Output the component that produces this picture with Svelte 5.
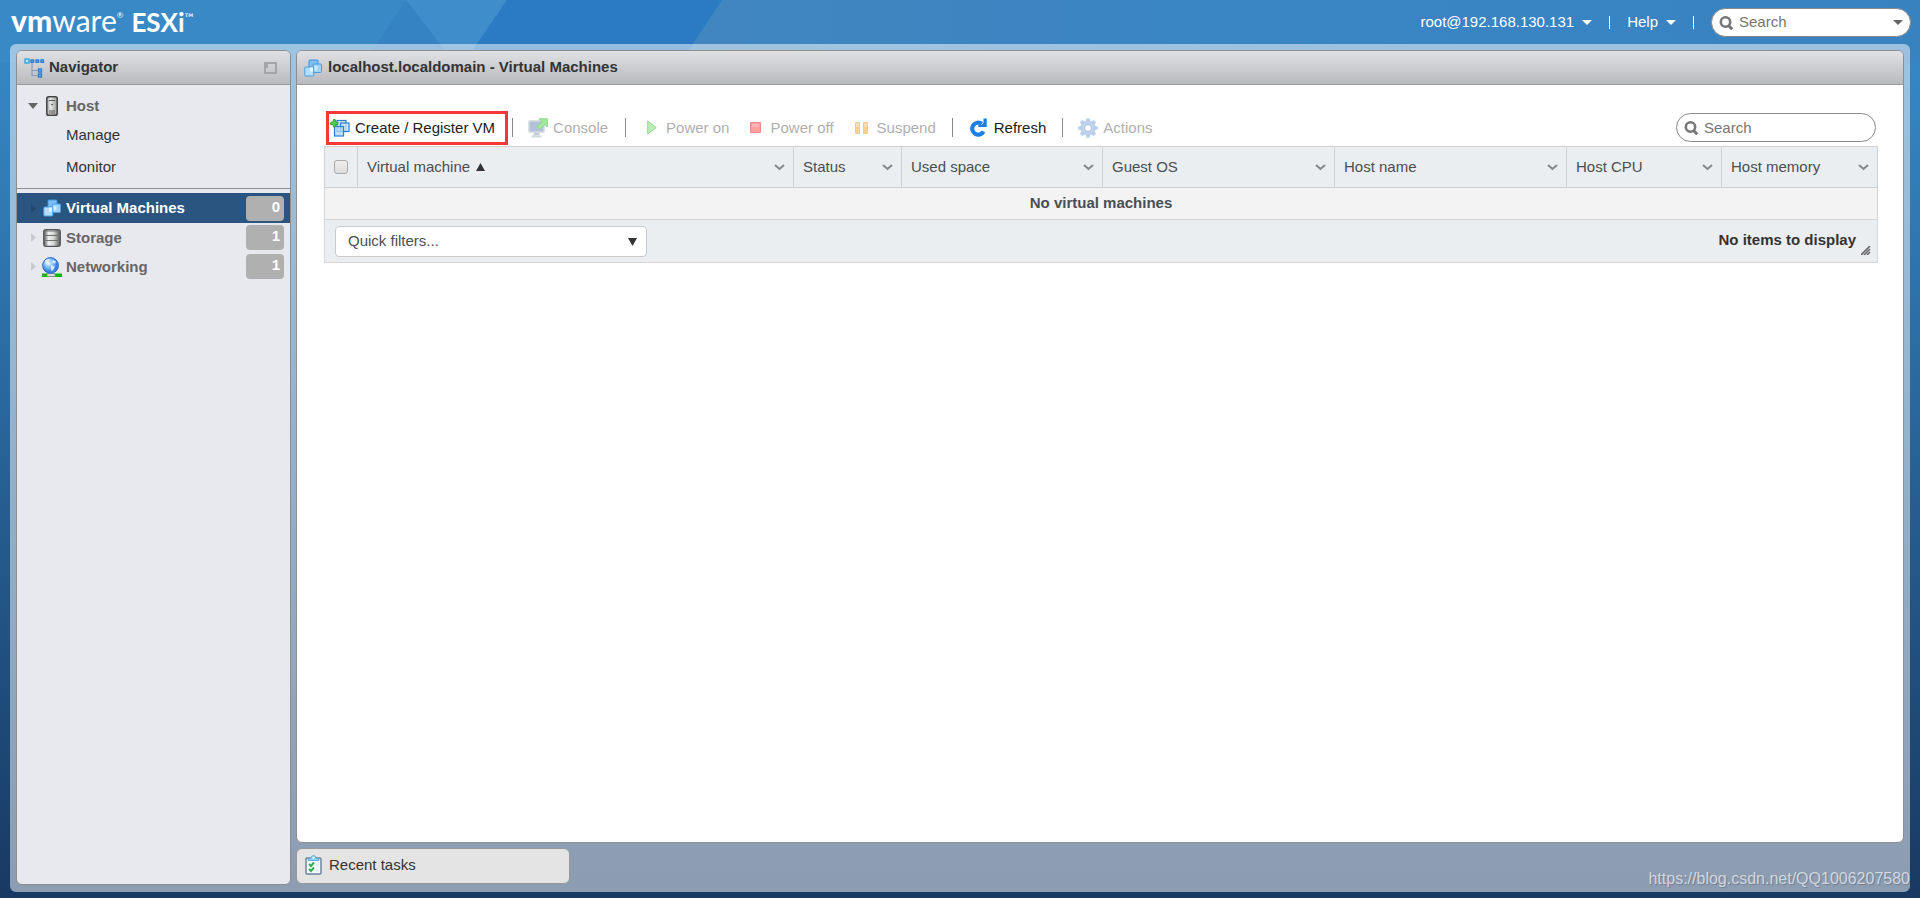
<script>
  const columns = [
    { label: 'Virtual machine', sorted: true },
    { label: 'Status', width: 108 },
    { label: 'Used space', width: 201 },
    { label: 'Guest OS', width: 232 },
    { label: 'Host name', width: 232 },
    { label: 'Host CPU', width: 155 },
    { label: 'Host memory', width: 156 }
  ];
  const inventory = [
    { label: 'Virtual Machines', icon: 'vm', count: 0, selected: true },
    { label: 'Storage', icon: 'storage', count: 1 },
    { label: 'Networking', icon: 'network', count: 1 }
  ];
</script>

{#snippet vmIcon()}
  <svg class="icon" width="18" height="18" viewBox="0 0 18 18" aria-hidden="true">
    <rect x="5" y="1" width="9" height="9" rx="1" fill="#7fc0f4" stroke="#3f93e0" />
    <rect x="9" y="5" width="8.500" height="8.500" rx="1" fill="#9dd2f9" stroke="#4a9be4" />
    <rect x=".8" y="8" width="9" height="9" rx="1" fill="#b4defb" stroke="#4a9be4" />
    <path d="M6 8.500h3v4H6z" fill="#e6f6ff" />
    <path d="M10.500 7h3v4.500h-3z" fill="#c9e9ff" />
  </svg>
{/snippet}

{#snippet magnifier()}
  <svg class="icon" width="15" height="15" viewBox="0 0 15 15" fill="none" stroke="#777" aria-hidden="true">
    <circle cx="6.500" cy="7" r="4.700" stroke-width="2.600" />
    <path d="M9.500 10.500l3.800 3.800" stroke-width="3" />
  </svg>
{/snippet}

<div class="page">
  <svg class="facets" width="100%" height="63" aria-hidden="true">
    <defs>
      <linearGradient id="sweep" x1="0" x2="1"><stop offset="0" stop-color="#4186bf" /><stop offset=".25" stop-color="#3a85c4" /><stop offset="1" stop-color="#3780bd" /></linearGradient>
    </defs>
    <rect width="100%" height="63" fill="#3a89c7" />
    <path d="M406 0L364 63H456Z" fill="#3583c2" />
    <path d="M406 0H507L464 63H455Z" fill="#408dcc" />
    <rect x="722" width="100%" height="63" fill="url(#sweep)" />
    <path d="M680 63L722 0V63Z" fill="#4186bf" />
    <path d="M507 0H722L680 63H464Z" fill="#2b7bc4" />
  </svg>

  <header>
    <h1><span class="brand"><b>vm</b>ware<sup>®</sup></span> <span class="product">ESXi<sup>™</sup></span></h1>
    <div class="account">
      <button class="menu">root@192.168.130.131<svg width="10" height="5" aria-hidden="true"><path d="M0 0h10L5 5z" fill="#fff" /></svg></button>
      <i></i>
      <button class="menu">Help<svg width="10" height="5" aria-hidden="true"><path d="M0 0h10L5 5z" fill="#fff" /></svg></button>
      <i></i>
      <label class="search global">
        {@render magnifier()}
        <input type="text" placeholder="Search" aria-label="Search inventory" />
        <svg width="10" height="5" aria-hidden="true"><path d="M0 0h10L5 5z" fill="#666" /></svg>
      </label>
    </div>
  </header>

  <div class="frame">
    <nav class="panel">
      <div class="title">
        <svg class="icon" width="21" height="20" viewBox="0 0 21 20" aria-hidden="true">
          <path d="M8 5v12.500h6M8 12.500h6M5 3h15" fill="none" stroke="#8a9bb4" stroke-width="1.200" />
          <rect x="1" y="1" width="4" height="4" fill="#aee3fa" stroke="#35a5dd" stroke-width="1.400" />
          <path d="M7 1.800h2.500v2.500H7zM12 1.800h2.500v2.500H12zM17 1.800h2.500v2.500H17zM14.500 11h3v3h-3zM14.500 16h3v3h-3z" fill="#6fb4f4" stroke="#2f7fd2" stroke-width="1.300" />
        </svg>
        <h2>Navigator</h2>
        <button class="collapse" aria-label="Collapse navigator">
          <svg width="13" height="12" aria-hidden="true"><rect x="1" y="1" width="11" height="10" fill="none" stroke="#a4a5a9" stroke-width="2" /><path d="M2 2h2v4H2z" fill="#a4a5a9" /></svg>
        </button>
      </div>
      <ul class="host">
        <li><a href="#host" class="node">
          <svg class="arrow" width="10" height="6" aria-hidden="true"><path d="M0 0h10L5 6z" fill="#666" /></svg>
          <span class="glyph">
            <svg width="12" height="20" viewBox="0 0 12 20" aria-hidden="true">
              <defs><linearGradient id="tower" x1="0" x2="1"><stop offset="0" stop-color="#999" /><stop offset=".35" stop-color="#e9e9e9" /><stop offset="1" stop-color="#999" /></linearGradient></defs>
              <rect x=".75" y=".75" width="10.500" height="18.500" rx="1.800" fill="url(#tower)" stroke="#444" stroke-width="1.500" />
              <path d="M3 4.500h6M3 15h6M3 17h6" stroke="#555" /><circle cx="6" cy="8.500" r=".8" fill="#333" />
            </svg>
          </span>
          Host
        </a></li>
        <li><a href="#manage" class="leaf">Manage</a></li>
        <li><a href="#monitor" class="leaf">Monitor</a></li>
      </ul>
      <ul class="inventory">
        {#each inventory as item}
          <li><a href="#{item.icon}" class="node" class:selected={item.selected}>
            <svg class="arrow" width="10" height="9" aria-hidden="true"><path d="M3 0v9l5-4.500z" fill={item.selected ? '#24486f' : '#c9cace'} /></svg>
            <span class="glyph">
              {#if item.icon === 'vm'}
                {@render vmIcon()}
              {:else if item.icon === 'storage'}
                <svg width="18" height="18" viewBox="0 0 18 18" aria-hidden="true">
                  <defs><linearGradient id="disk" x1="0" x2="1"><stop offset="0" stop-color="#555" /><stop offset=".3" stop-color="#f2f2f2" /><stop offset=".6" stop-color="#d5d5d5" /><stop offset="1" stop-color="#555" /></linearGradient></defs>
                  <rect x=".7" y=".7" width="16.600" height="16.600" rx="2" fill="url(#disk)" stroke="#555" stroke-width="1.200" />
                  <path d="M1 2h16M1 6.500h16M1 11.500h16" fill="none" stroke="#707070" />
                </svg>
              {:else}
                <svg width="20" height="20" viewBox="0 0 20 20" aria-hidden="true">
                  <defs><radialGradient id="globe" cx=".4" cy=".35"><stop offset="0" stop-color="#d5ebff" /><stop offset=".6" stop-color="#7db9f8" /><stop offset="1" stop-color="#3c80dd" /></radialGradient></defs>
                  <path d="M0 16.500h20v3.500H0z" fill="#0eb30e" /><path d="M5 17q3.500-2 8 0v2.500H5z" fill="#ddd" stroke="#888" stroke-width=".7" />
                  <circle cx="8.500" cy="8.500" r="7.900" fill="url(#globe)" stroke="#2a6ccb" />
                  <path d="M3 3.500q3-2 5-1L6.500 5l2 1.500-2 2L3.500 7zM9 8l4 1.500-2 4-2 .5zM11 3l3 1.500-1 2-3-1z" fill="#e8f5ff" opacity=".85" />
                </svg>
              {/if}
            </span>
            {item.label}
            <span class="count">{item.count}</span>
          </a></li>
        {/each}
      </ul>
    </nav>

    <div class="workspace">
      <main class="panel">
        <div class="title">{@render vmIcon()}<h2>localhost.localdomain - Virtual Machines</h2></div>
        <div class="content">
          <div class="toolbar">
            <button class="create">
              <svg class="icon" width="20" height="18" viewBox="0 0 20 18" aria-hidden="true">
                <rect x="7" y="1.500" width="9" height="11" fill="#d3eafb" stroke="#2b7fd8" stroke-width="1.200" />
                <rect x="10.500" y="4" width="8.500" height="8.500" fill="#c4e3fa" fill-opacity=".8" stroke="#2b7fd8" stroke-width="1.200" />
                <rect x="4.500" y="7.500" width="9" height="9.500" fill="#afd8f8" fill-opacity=".8" stroke="#2b7fd8" stroke-width="1.200" />
                <path d="M3.200.7h2.200v2.500h2.500v2.200H5.400v2.500H3.200V5.400H.7V3.200h2.500z" fill="#55d955" stroke="#28a828" />
              </svg>Create / Register VM
            </button>
            <i></i>
            <button class="console" disabled>
              <svg class="icon" width="20" height="20" viewBox="0 0 20 20" aria-hidden="true">
                <rect x=".8" y="2.800" width="15.400" height="11.400" rx="1" fill="#b3c2da" stroke="#dce1e5" stroke-width="1.600" />
                <path d="M6 14.500h5l1 3H5z" fill="#c8ced4" /><path d="M3.500 18.500h10" stroke="#d0dbe0" stroke-width="2" />
                <path d="M11 .8h8.300V9l-2.600-2.600-5.200 5-2.600-2.600 5.200-5z" fill="#a5e99b" stroke="#8cd986" />
              </svg>Console
            </button>
            <i></i>
            <button class="power" disabled>
              <svg class="icon" width="10" height="15" viewBox="0 0 10 15" aria-hidden="true"><path d="M.7 1v13l8.500-6.500z" fill="#b9efb7" stroke="#8fda8d" /></svg>Power on
            </button>
            <button class="power" disabled>
              <svg class="icon" width="11" height="11" aria-hidden="true"><path d="M.5.5h10v10H.5z" fill="#ff9f9f" stroke="#e88c8c" /><path d="M2 2h7v3H2z" fill="#ffb5b5" /></svg>Power off
            </button>
            <button class="power pause" disabled>
              <svg class="icon" width="13" height="12" aria-hidden="true"><path d="M.5.5h4v11h-4zM8.500.5h4v11h-4z" fill="#fdcf8f" stroke="#f8c78b" /><path d="M1 1h3v4H1zM9 1h3v4H9z" fill="#ffdcae" /></svg>Suspend
            </button>
            <i></i>
            <button class="refresh">
              <svg class="icon" width="19" height="19" viewBox="0 0 19 19" aria-hidden="true"><path d="M12.800 5.800A6 6 0 1 0 14.500 13.500" fill="none" stroke="#1b7fe4" stroke-width="4.200" /><path d="M17.800.5V9H9.300V7h3L14.500 5V.5z" fill="#1b7fe4" /></svg>Refresh
            </button>
            <i></i>
            <button class="actions" disabled>
              <svg class="icon" width="20" height="20" viewBox="-10 -10 20 20" aria-hidden="true">
                {#each [0, 45, 90, 135] as turn}<rect x="-1.800" y="-9.800" width="3.600" height="19.600" rx=".6" fill="#b9cdea" transform="rotate({turn})" />{/each}
                <circle r="7.300" fill="#bfd1ed" stroke="#b0c6e6" stroke-width=".7" /><circle r="3.500" fill="#fff" stroke="#a9bddc" />
              </svg>Actions
            </button>
            <label class="search filter">
              {@render magnifier()}
              <input type="text" placeholder="Search" aria-label="Search virtual machines" />
            </label>
          </div>

          <table>
            <colgroup>
              <col style="width: 33px" />
              {#each columns as column}<col style={column.width ? `width: ${column.width}px` : ''} />{/each}
            </colgroup>
            <thead>
              <tr>
                <th class="check"><input type="checkbox" aria-label="Select all" /></th>
                {#each columns as column}
                  <th scope="col"><span class="heading">
                    {column.label}
                    {#if column.sorted}<svg width="9" height="8" aria-hidden="true"><path d="M0 8h9L4.500 0z" fill="#333" /></svg>{/if}
                    <button aria-label="{column.label} options"><svg width="11" height="7" aria-hidden="true"><path d="M1 1l4.500 4L10 1" fill="none" stroke="#848789" stroke-width="2" /></svg></button>
                  </span></th>
                {/each}
              </tr>
            </thead>
            <tbody><tr><td colspan="8">No virtual machines</td></tr></tbody>
            <tfoot>
              <tr><td colspan="8"><div class="footer">
                <span class="picker">
                  <select aria-label="Quick filters"><option>Quick filters...</option></select>
                  <svg width="9" height="8" aria-hidden="true"><path d="M0 0h9L4.500 8z" fill="#333" /></svg>
                </span>
                <strong>No items to display</strong>
                <svg class="grip" width="10" height="9" aria-hidden="true"><path d="M0 9L9 0M3 9l6-6M6 9l3-3" stroke="#666" stroke-width="1.600" /></svg>
              </div></td></tr>
            </tfoot>
          </table>
        </div>
      </main>
      <button class="tasks">
        <svg class="icon" width="17" height="20" viewBox="0 0 17 20" aria-hidden="true">
          <rect x="1" y="3" width="15" height="16" rx="1" fill="#f3faff" stroke="#70849a" stroke-width="1.500" />
          <path d="M3 5.500V4l3-1q.5-2.500 2.500-2.500T11 3l3 1v1.500z" fill="#8fd0f2" stroke="#4da4d4" stroke-width=".8" /><circle cx="8.500" cy="2.800" r="1" fill="#fff" />
          <path d="M4 9l2 2 3-3.500M4 14l2 2 3-3.500" fill="none" stroke="#35aa4e" stroke-width="2" /><path d="M11 10h2.500M11 15h2.500" stroke="#cbdce8" />
        </svg>Recent tasks
      </button>
    </div>
  </div>
  <span class="watermark">https://blog.csdn.net/QQ1006207580</span>
</div>

<style>
  :global(body) { margin: 0; }
  .page, .page * { box-sizing: border-box; }
  .page {
    position: relative; display: flex; flex-direction: column; min-height: 100vh;
    background: linear-gradient(#3888c6 0, #3586c3 8%, #1c4470 87%, #193963 100%);
    font: 15px/20px "Liberation Sans", Arial, sans-serif; color: #333;
  }
  .facets { position: absolute; top: 0; left: 0; }
  svg { flex: none; display: block; }
  button { font: inherit; color: inherit; background: none; border: 0; padding: 0; display: flex; align-items: center; }
  h1, h2, ul { margin: 0; padding: 0; font-weight: inherit; }
  ul { list-style: none; }
  a { color: inherit; text-decoration: none; }

  header { position: relative; height: 44px; display: flex; justify-content: space-between; align-items: center; padding: 0 9px 0 11px; color: #fff; }
  h1 { display: flex; align-items: baseline; gap: 8px; padding-bottom: 2px; font: 30px/36px Lato, sans-serif; }
  .brand b { font-weight: 900; }
  .product { font-size: 26px; font-weight: 700; }
  sup { font-size: 8px; line-height: 8px; font-weight: 400; vertical-align: 14px; }
  .product sup { font-size: 12px; vertical-align: 10px; }
  .account { display: flex; align-items: center; gap: 17px; }
  .account i { width: 1px; height: 13px; background: #fff; }
  .menu { gap: 8px; }
  .search { display: flex; align-items: center; gap: 5px; width: 200px; height: 29px; padding: 0 12px 0 7px; background: #fff; border: 1px solid #888; border-radius: 15px; }
  .search.global { padding-right: 7px; }
  .search input { flex: 1; min-width: 0; padding: 0; border: 0; outline: 0; background: none; font: inherit; color: #555; }
  .search input::placeholder { color: #757575; opacity: 1; }

  .frame { position: relative; flex: 1; display: flex; gap: 5px; margin: 0 10px 6px; padding: 6px 6px 7px; background: rgba(255, 255, 255, .5); border-radius: 6px; }
  .panel { border: 1px solid #8e8e8e; border-radius: 6px; overflow: hidden; }
  nav { width: 275px; flex: none; background: #e8e9ee; }
  .workspace { flex: 1; min-width: 0; display: flex; flex-direction: column; gap: 5px; padding-bottom: 1px; }
  main { flex: 1; background: #fff; }
  .title { height: 34px; display: flex; align-items: center; gap: 6px; padding: 0 13px 0 7px; background: linear-gradient(#e0e1e5, #b9babd); border-bottom: 1px solid #999; }
  nav .title { gap: 4px; }
  h2 { font-size: 15px; line-height: 20px; font-weight: 700; padding-bottom: 2px; }
  .collapse { margin-left: auto; }

  .host { height: 104px; padding-top: 6px; border-bottom: 1px solid #8d8e91; }
  .inventory { padding-top: 4px; }
  .node { height: 29px; display: flex; align-items: center; padding: 0 6px 0 11px; font-weight: 700; color: #666; }
  .glyph { width: 28px; display: flex; justify-content: center; }
  .leaf { display: block; padding: 5px 0 7px 49px; }
  .selected { height: 30px; background: #2a5580; color: #fff; }
  .count { margin-left: auto; width: 38px; height: 25px; padding: 1px 4px; border-radius: 4px; background: #b0b0b0; color: #fff; text-align: right; }

  .content { padding: 25px 25px 0 27px; }
  .toolbar { display: flex; align-items: center; height: 36px; padding-bottom: 1px; }
  .toolbar i { width: 1px; height: 19px; background: #888; }
  .toolbar button { gap: 6px; white-space: nowrap; color: #222; }
  .toolbar button:disabled { color: #b0b0b0; }
  .toolbar .create { margin: 0 4px 0 2px; height: 34px; padding: 0 10px 0 1px; gap: 5px; border: 3px solid #fa3738; }
  .toolbar .console { margin: 0 17px 0 15px; gap: 5px; }
  .toolbar .power { margin-left: 21px; gap: 9px; }
  .toolbar .pause { margin-right: 16px; }
  .toolbar .refresh { margin: 0 16px; }
  .toolbar .actions { margin-left: 15px; gap: 5px; }
  .filter { margin: 0 2px 0 auto; }

  table { width: 100%; table-layout: fixed; border-collapse: collapse; border: 1px solid #d3d5d7; }
  th { height: 41px; padding: 0 8px 0 9px; background: #ebeef1; border: 1px solid #ced0d2; text-align: left; font-weight: 400; color: #494f52; }
  .check { padding: 0; }
  .check input { appearance: none; display: block; width: 14px; height: 14px; margin: 0 auto; border: 1px solid #aaa; border-radius: 3px; background: linear-gradient(#eee, #ddd); }
  .heading { display: flex; align-items: center; gap: 6px; white-space: nowrap; }
  .heading button { margin-left: auto; }
  tbody td { height: 32px; padding: 0 0 2px; background: #f3f3f3; text-align: center; font-weight: 700; color: #494f52; }
  tfoot td { padding: 0; background: #ebeef1; border-top: 1px solid #d3d5d7; }
  .footer { display: flex; align-items: center; height: 42px; padding: 0 6px 0 10px; }
  .picker { position: relative; width: 312px; }
  .picker svg { position: absolute; right: 10px; top: 12px; pointer-events: none; }
  select { appearance: none; display: block; width: 100%; height: 31px; padding: 0 12px; border: 1px solid #c8cacc; border-radius: 4px; background: #fff; font: inherit; color: #494f52; }
  strong { margin-left: auto; padding-bottom: 2px; }
  .grip { margin-left: 5px; align-self: flex-end; margin-bottom: 7px; }

  .tasks { width: 274px; height: 36px; gap: 7px; padding: 0 8px 2px; background: #e4e4e4; border: 1px solid #999; border-radius: 6px; }
  .watermark { position: absolute; right: 10px; bottom: 9px; font-size: 16px; line-height: 20px; color: rgba(255, 255, 255, .65); text-shadow: 1px 1px 1px rgba(70, 80, 100, .4); }
</style>
